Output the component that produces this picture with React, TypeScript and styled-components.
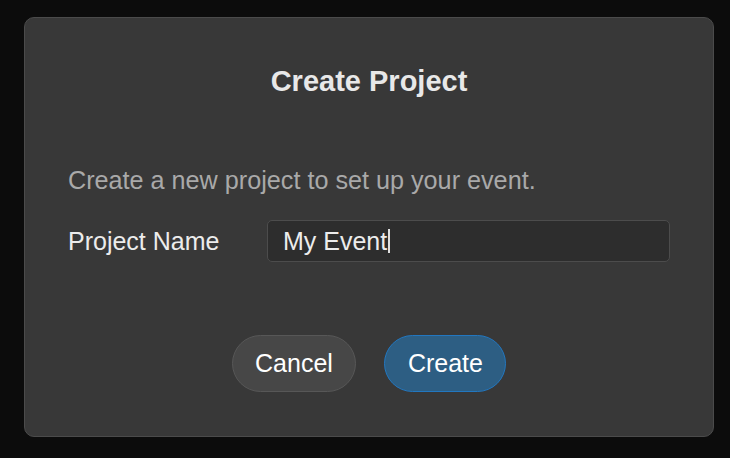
import styled, { createGlobalStyle } from "styled-components";

const GlobalStyle = createGlobalStyle`
  html, body {
    margin: 0;
    padding: 0;
    background: #0c0c0c;
  }
  body {
    font-family: "Liberation Sans", Arial, Helvetica, sans-serif;
  }
`;

const Page = styled.div`
  width: 730px;
  height: 458px;
  padding: 17px 0 0 24px;
  box-sizing: border-box;
`;

const Dialog = styled.div`
  width: 690px;
  height: 420px;
  box-sizing: border-box;
  background: #383838;
  border: 1px solid #4b4b4b;
  border-radius: 10px;
  padding: 47px 43px 0 43px;
  display: flex;
  flex-direction: column;
`;

const Title = styled.h2`
  margin: 0;
  text-align: center;
  font-size: 29px;
  line-height: 1.15;
  font-weight: 700;
  color: #e8e8e8;
`;

const Description = styled.p`
  margin: 68px 0 0 0;
  font-size: 25.2px;
  line-height: 1.15;
  color: #a9a9a9;
`;

const FieldRow = styled.div`
  margin-top: 25px;
  display: grid;
  grid-template-columns: 199px 1fr;
  align-items: center;
`;

const Label = styled.label`
  font-size: 25px;
  line-height: 1.15;
  color: #ececec;
`;

const Field = styled.div`
  height: 42px;
  box-sizing: border-box;
  background: #2d2d2d;
  border: 1px solid #4c4c4c;
  border-radius: 5px;
  padding: 0 15px;
  display: flex;
  align-items: center;
  font-size: 25px;
  color: #ececec;
`;

const Caret = styled.span`
  display: inline-block;
  width: 1.5px;
  height: 24px;
  margin-left: 1px;
  background: #e0e0e0;
`;

const Actions = styled.div`
  margin-top: 73px;
  display: flex;
  justify-content: center;
  gap: 28px;
`;

const Button = styled.button<{ $primary?: boolean }>`
  height: 57px;
  padding: 0 22.5px;
  box-sizing: border-box;
  border-radius: 29px;
  font-family: "Liberation Sans", Arial, sans-serif;
  font-size: 25px;
  color: #ffffff;
  background: ${(p) => (p.$primary ? "#2d5e83" : "#474747")};
  border: 1px solid ${(p) => (p.$primary ? "#2277c0" : "#575757")};
  cursor: pointer;
`;

export default function App() {
  return (
    <>
      <GlobalStyle />
      <Page>
        <Dialog>
          <Title>Create Project</Title>
          <Description>Create a new project to set up your event.</Description>
          <FieldRow>
            <Label>Project Name</Label>
            <Field>
              My Event
              <Caret />
            </Field>
          </FieldRow>
          <Actions>
            <Button>Cancel</Button>
            <Button $primary>Create</Button>
          </Actions>
        </Dialog>
      </Page>
    </>
  );
}
